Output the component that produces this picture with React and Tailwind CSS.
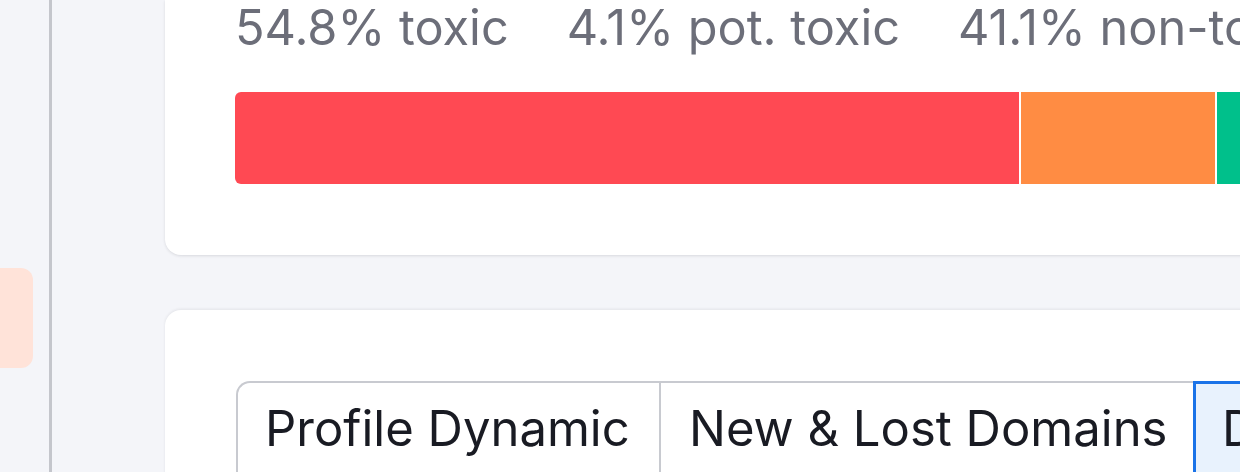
import React from 'react';

const stats = [
    { label: '54.8% toxic' },
    { label: '4.1% pot. toxic' },
    { label: '41.1% non-toxic' },
];

const tabs = [
    { label: 'Profile Dynamic', width: 'w-[423px]', active: false },
    { label: 'New & Lost Domains', width: 'w-[534px]', active: false },
    { label: 'Distribution', width: 'w-[420px]', active: true },
];

const App = () => {
    return (
        <div className="flex w-[1240px] h-[472px] overflow-hidden bg-[#f4f5f9] font-['Inter','Liberation_Sans',sans-serif]">
            {/* Sidebar */}
            <aside className="w-[52px] shrink-0 border-r-[3px] border-[#c4c6cc] flex flex-col">
                <div className="mt-[268px] w-[33px] h-[100px] rounded-r-[12px] bg-[#ffe3d9]"></div>
            </aside>

            {/* Main */}
            <main className="flex-1 min-w-0 overflow-hidden pl-[113px] flex flex-col">
                {/* Toxicity card */}
                <section className="w-[1200px] h-[255px] shrink-0 bg-white rounded-b-[16px] shadow-[0_1px_3px_rgba(25,27,35,0.12)] pl-[70px] pt-[4px]">
                    <div className="flex gap-[58px] text-[48.7px] leading-[48px] text-[#6c6e79] whitespace-nowrap">
                        {stats.map((s, i) => (
                            <span key={i}>{s.label}</span>
                        ))}
                    </div>
                    <div className="mt-[40px] flex gap-[2px] h-[92px] w-[1100px]">
                        <div className="w-[784px] shrink-0 bg-[#ff4953] rounded-l-[6px]"></div>
                        <div className="w-[194px] shrink-0 bg-[#ff8c43]"></div>
                        <div className="flex-1 bg-[#00c08b]"></div>
                    </div>
                </section>

                {/* Tabs card */}
                <section className="mt-[55px] w-[1200px] flex-1 bg-white rounded-t-[16px] shadow-[0_-1px_3px_rgba(25,27,35,0.08)] pl-[71px] pt-[71px]">
                    <div className="flex h-[120px]">
                        {tabs.map((t, i) => (
                            <div
                                key={i}
                                className={
                                    t.active
                                        ? `${t.width} shrink-0 border-[3px] border-[#1a73e8] bg-[#e8f2fd] pl-[26px] pt-[16px] text-[49px] leading-[58px] text-[#191b23] whitespace-nowrap`
                                        : i === 0
                                        ? `${t.width} shrink-0 border-2 border-r-0 border-[#c8cad0] rounded-tl-[14px] pl-[27px] pt-[17px] text-[49px] leading-[58px] text-[#191b23] whitespace-nowrap`
                                        : `${t.width} shrink-0 border-2 border-r-0 border-[#c8cad0] pl-[28px] pt-[17px] text-[49px] leading-[58px] text-[#191b23] whitespace-nowrap`
                                }
                            >
                                {t.label}
                            </div>
                        ))}
                    </div>
                </section>
            </main>
        </div>
    );
};

export default App;
